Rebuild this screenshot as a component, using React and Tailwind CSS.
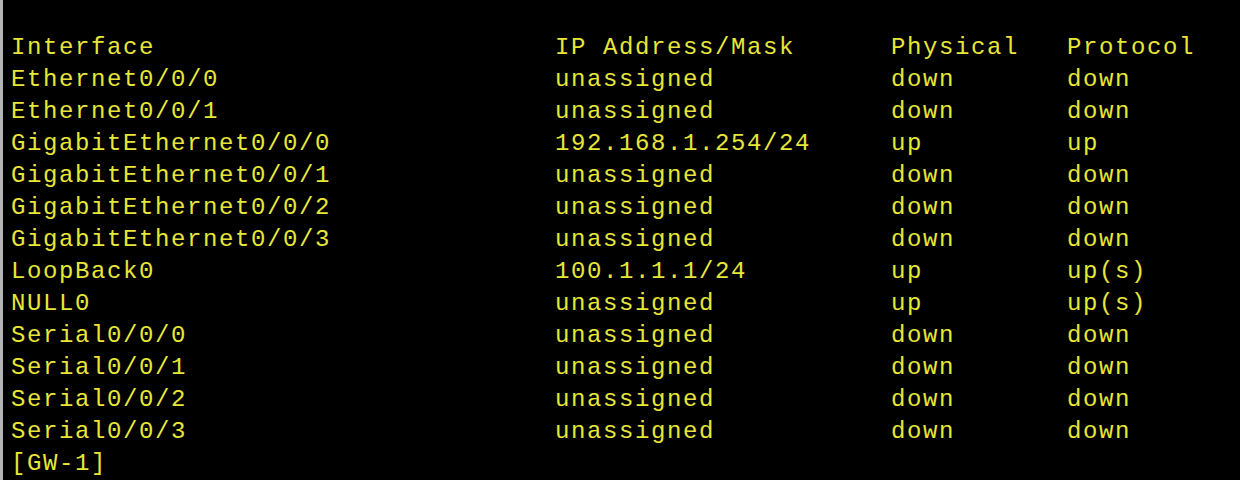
const HEADER = ['Interface', 'IP Address/Mask', 'Physical', 'Protocol'];

const ROWS = [
  ['Ethernet0/0/0', 'unassigned', 'down', 'down'],
  ['Ethernet0/0/1', 'unassigned', 'down', 'down'],
  ['GigabitEthernet0/0/0', '192.168.1.254/24', 'up', 'up'],
  ['GigabitEthernet0/0/1', 'unassigned', 'down', 'down'],
  ['GigabitEthernet0/0/2', 'unassigned', 'down', 'down'],
  ['GigabitEthernet0/0/3', 'unassigned', 'down', 'down'],
  ['LoopBack0', '100.1.1.1/24', 'up', 'up(s)'],
  ['NULL0', 'unassigned', 'up', 'up(s)'],
  ['Serial0/0/0', 'unassigned', 'down', 'down'],
  ['Serial0/0/1', 'unassigned', 'down', 'down'],
  ['Serial0/0/2', 'unassigned', 'down', 'down'],
  ['Serial0/0/3', 'unassigned', 'down', 'down'],
];

function Row({ cells }) {
  return (
    <div className="flex h-8 items-center whitespace-pre">
      <span className="w-[544px] shrink-0">{cells[0]}</span>
      <span className="w-[336px] shrink-0">{cells[1]}</span>
      <span className="w-[176px] shrink-0">{cells[2]}</span>
      <span>{cells[3]}</span>
    </div>
  );
}

export default function App() {
  return (
    <div className="flex h-[480px] w-[1240px] overflow-hidden bg-black">
      <div className="w-[3px] shrink-0 bg-[#b4b4b4]" />
      <div
        className="flex-1 pl-[8px] pt-[32px] text-[24px] leading-8 tracking-[1.6px] text-[#e8e638]"
        style={{ fontFamily: '"Liberation Mono", "Courier New", monospace' }}
      >
        <Row cells={HEADER} />
        {ROWS.map((r) => (
          <Row key={r[0]} cells={r} />
        ))}
        <div className="flex h-8 items-center whitespace-pre">[GW-1]</div>
      </div>
    </div>
  );
}
